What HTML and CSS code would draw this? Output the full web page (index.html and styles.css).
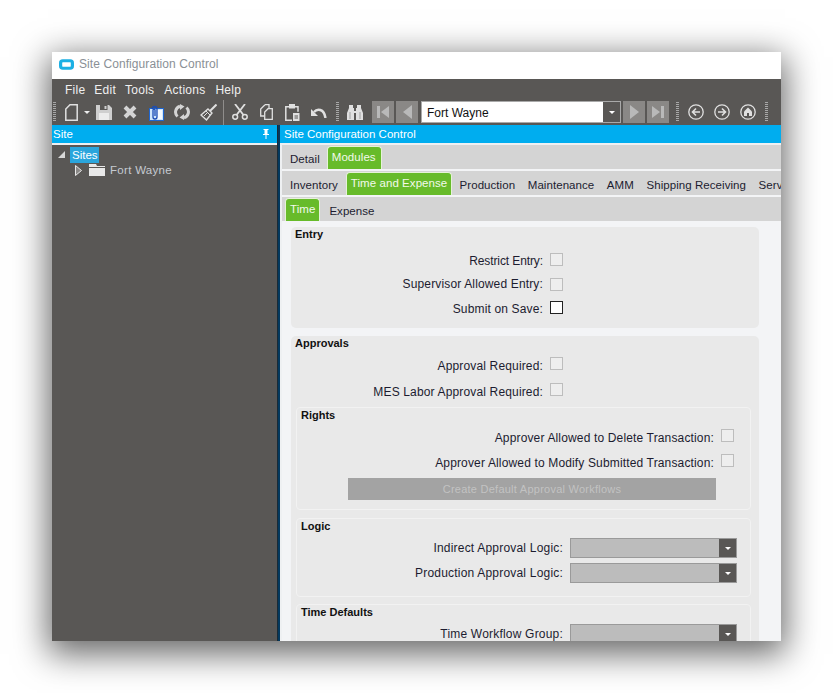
FILE: index.html
```html
<!DOCTYPE html>
<html lang="en">
<head>
<meta charset="utf-8">
<title>Site Configuration Control</title>
<link rel="stylesheet" href="styles.css">
</head>
<body>
<div class="window">
  <header class="titlebar">
    <svg class="app-icon" viewBox="0 0 14 10"><rect x="1.5" y="1.5" width="11" height="7" rx="2" fill="#fff" stroke="#1cb0e4" stroke-width="3"/></svg>
    <span>Site Configuration Control</span>
  </header>
  <nav class="menubar">
    <span>File</span><span>Edit</span><span>Tools</span><span>Actions</span><span>Help</span>
  </nav>
  <div class="toolbar">
    <i class="grip first-grip"></i>
    <svg class="ic i-new" width="13" height="17" viewBox="0 0 13 17"><path d="M5 .8h7.200v15.400H.8V5z" fill="none" stroke="#e0e0e0" stroke-width="1.500"/></svg>
    <i class="caret"></i>
    <svg class="ic i-save" width="16" height="15" viewBox="0 0 16 15"><path d="M0 0h13l3 3v12H0z" fill="#cfcfcf"/><rect x="4" y="0" width="7.500" height="5" fill="#595755"/><rect x="8.500" y="1" width="2" height="3" fill="#cfcfcf"/><rect x="3" y="8" width="10" height="7" fill="#ececec"/></svg>
    <svg class="ic i-x" width="14" height="14" viewBox="0 0 14 14"><path d="M2 2l10 10M12 2L2 12" stroke="#d4d4d4" stroke-width="4"/></svg>
    <svg class="ic i-clip" width="15" height="17" viewBox="0 0 15 17"><rect x=".5" y="4.500" width="14" height="12" fill="#cfe6fb" stroke="#1f66d0"/><rect x="8" y="6" width="5" height="9" fill="#f4faff"/><path d="M3 5a2.500 2.500 0 0 1 5 0v8a2 2 0 0 1-4 0V6a1 1 0 0 1 2 0v6" fill="none" stroke="#1b4db5" stroke-width="1.300"/></svg>
    <svg class="ic i-sync" width="16" height="16" viewBox="0 0 16 16"><path d="M3.500 12.500A6 6 0 0 1 6 2.300" fill="none" stroke="#d4d4d4" stroke-width="3"/><path d="M12.500 3.500A6 6 0 0 1 10 13.700" fill="none" stroke="#d4d4d4" stroke-width="3"/><path d="M6 0l4.500 2.500L6 6zM10 16l-4.500-2.500L10 10z" fill="#d4d4d4"/></svg>
    <svg class="ic i-broom" width="17" height="17" viewBox="0 0 17 17"><path d="M16.500 .5L10 7" stroke="#e0e0e0" stroke-width="2"/><path d="M8 5l4 4-5.500 7L1 11z" fill="none" stroke="#e0e0e0" stroke-width="1.400"/><path d="M6 7l4 4M4 12l3-3" stroke="#e0e0e0"/></svg>
    <i class="sep"></i>
    <svg class="ic i-cut" width="16" height="16" viewBox="0 0 16 16"><path d="M3 0l8.500 11M13 0L4.500 11" stroke="#e0e0e0" stroke-width="1.800"/><circle cx="3.200" cy="12.800" r="2.400" fill="none" stroke="#e0e0e0" stroke-width="1.500"/><circle cx="12.800" cy="12.800" r="2.400" fill="none" stroke="#e0e0e0" stroke-width="1.500"/></svg>
    <svg class="ic i-copy" width="13" height="16" viewBox="0 0 13 16"><path d="M5 .7h4v5M5 .7L.7 5v7H4" fill="none" stroke="#e0e0e0" stroke-width="1.300"/><path d="M8 4.700h4.300v10.600H4.700V8z" fill="#595755" stroke="#e0e0e0" stroke-width="1.300"/></svg>
    <svg class="ic i-paste" width="15" height="17" viewBox="0 0 15 17"><path d="M4 2.700H.8v13.600H7M10 2.700h3v5" fill="none" stroke="#e0e0e0" stroke-width="1.500"/><rect x="4" y="0" width="6" height="4.500" fill="#e0e0e0"/><path d="M8 9h6.500v8H8z" fill="#e0e0e0"/><path d="M9.500 12h3.500M9.500 14h3.500" stroke="#595755"/></svg>
    <svg class="ic i-undo" width="16" height="11" viewBox="0 0 16 11"><path d="M3 5C6 1.500 13 1 14.500 11" fill="none" stroke="#e0e0e0" stroke-width="2.500"/><path d="M0 2l7 7H0z" fill="#e0e0e0"/></svg>
    <i class="grip g2"></i>
    <svg class="ic i-bino" width="16" height="15" viewBox="0 0 16 15"><path d="M2 0h4v3h1v3H9V3h1V0h4v3l2 5v7H9V8H7v7H0V8l2-5z" fill="#e0e0e0"/><path d="M3 7v7M13 7v7" stroke="#a0a0a0"/></svg>
    <button class="nav-btn b-first"><svg width="12" height="12" viewBox="0 0 12 12"><path d="M0 0h3v12H0zM12 0v12L4 6z" fill="#b9b9b9"/></svg></button>
    <button class="nav-btn b-prev"><svg width="9" height="14" viewBox="0 0 9 14"><path d="M9 0v14L0 7z" fill="#b9b9b9"/></svg></button>
    <div class="site-combo"><span>Fort Wayne</span><b class="combo-arrow"><i></i></b></div>
    <button class="nav-btn b-next"><svg width="9" height="14" viewBox="0 0 9 14"><path d="M0 0v14l9-7z" fill="#b9b9b9"/></svg></button>
    <button class="nav-btn b-last"><svg width="12" height="12" viewBox="0 0 12 12"><path d="M0 0v12l8-6zM9 0h3v12H9z" fill="#b9b9b9"/></svg></button>
    <i class="grip g3"></i>
    <svg class="ic i-back" width="16" height="16" viewBox="0 0 16 16"><circle cx="8" cy="8" r="7.200" fill="none" stroke="#e0e0e0" stroke-width="1.300"/><path d="M12 8H5M8 4.500L4.500 8 8 11.500" fill="none" stroke="#e0e0e0" stroke-width="1.600"/></svg>
    <svg class="ic i-fwd" width="16" height="16" viewBox="0 0 16 16"><circle cx="8" cy="8" r="7.200" fill="none" stroke="#e0e0e0" stroke-width="1.300"/><path d="M4 8h7M8 4.500L11.500 8 8 11.500" fill="none" stroke="#e0e0e0" stroke-width="1.600"/></svg>
    <svg class="ic i-home" width="16" height="16" viewBox="0 0 16 16"><circle cx="8" cy="8" r="7.200" fill="none" stroke="#e0e0e0" stroke-width="1.300"/><path d="M8 3.500L12 7.500V12H4V7.500z" fill="#e0e0e0"/><rect x="7" y="9" width="2" height="3" fill="#595755"/></svg>
    <i class="grip g4"></i>
  </div>
  <main class="workspace">
    <aside class="tree-panel">
      <div class="panel-head">
        <span>Site</span>
        <svg width="8" height="10" viewBox="0 0 8 10"><path d="M1.500 0h5v1h-1v4h1.500v1H4.500v4h-1V6H1V5h1.500V1h-1z" fill="#fff"/></svg>
      </div>
      <div class="tree">
        <div class="tree-root">
          <svg width="9" height="9" viewBox="0 0 9 9"><path d="M8 1v7H1z" fill="#d8d8d8"/></svg>
          <span class="tree-sel">Sites</span>
        </div>
        <div class="tree-child">
          <svg class="expander" width="7" height="11" viewBox="0 0 7 11"><path d="M.5.5l6 5-6 5z" fill="#8a8886" stroke="#e8e8e8"/></svg>
          <svg class="folder" width="16" height="12" viewBox="0 0 16 12"><path d="M0 0h7l1 2h8v1H0z" fill="#e8e8e8"/><rect y="4" width="16" height="8" fill="#e8e8e8"/></svg>
          <span>Fort Wayne</span>
        </div>
      </div>
    </aside>
    <div class="splitter"></div>
    <section class="detail">
      <div class="panel-head detail-head"><span>Site Configuration Control</span></div>
      <div class="tabs tabs-1">
        <span class="tab">Detail</span><span class="tab on">Modules</span>
      </div>
      <div class="tabs tabs-2">
        <span class="tab">Inventory</span><span class="tab on">Time and Expense</span><span class="tab">Production</span><span class="tab">Maintenance</span><span class="tab">AMM</span><span class="tab">Shipping Receiving</span><span class="tab">Service</span>
      </div>
      <div class="tabs tabs-3">
        <span class="tab on">Time</span><span class="tab">Expense</span>
      </div>
      <div class="content">
        <section class="card entry">
          <h3>Entry</h3>
          <div class="row r1"><label>Restrict Entry:</label><i class="check off"></i></div>
          <div class="row r2"><label>Supervisor Allowed Entry:</label><i class="check off"></i></div>
          <div class="row r3"><label>Submit on Save:</label><i class="check"></i></div>
        </section>
        <section class="card approvals">
          <h3>Approvals</h3>
          <div class="row r4"><label>Approval Required:</label><i class="check off"></i></div>
          <div class="row r5"><label>MES Labor Approval Required:</label><i class="check off"></i></div>
          <section class="sub rights">
            <h3>Rights</h3>
            <div class="row r6"><label>Approver Allowed to Delete Transaction:</label><i class="check off"></i></div>
            <div class="row r7"><label>Approver Allowed to Modify Submitted Transaction:</label><i class="check off"></i></div>
            <div class="wide-btn">Create Default Approval Workflows</div>
          </section>
          <section class="sub logic">
            <h3>Logic</h3>
            <div class="row r8"><label>Indirect Approval Logic:</label><div class="combo"><b class="combo-arrow"><i></i></b></div></div>
            <div class="row r9"><label>Production Approval Logic:</label><div class="combo"><b class="combo-arrow"><i></i></b></div></div>
          </section>
          <section class="sub defaults">
            <h3>Time Defaults</h3>
            <div class="row r10"><label>Time Workflow Group:</label><div class="combo"><b class="combo-arrow"><i></i></b></div></div>
          </section>
        </section>
      </div>
    </section>
  </main>
</div>
</body>
</html>
```
FILE: styles.css
```css
* { box-sizing: border-box; }
html, body { margin: 0; height: 100%; background: #fff; overflow: hidden; }
body { padding: 52px 52px 0; font: 12px "Liberation Sans", Arial, sans-serif; color: #1c1c30; }
.window { width: 729px; height: 589px; display: flex; flex-direction: column; background: #595755; box-shadow: 0 9px 32px 4px rgba(0,0,0,.6); overflow: hidden; }
.titlebar { height: 27px; flex: none; background: #fff; display: flex; align-items: center; padding: 0 0 3px 7px; color: #8a9096; font-size: 12px; letter-spacing: .08px; }
.app-icon { width: 15px; height: 11px; margin-right: 5px; }
.menubar { height: 22px; flex: none; display: flex; align-items: center; padding-left: 13px; color: #f0f0f0; letter-spacing: .25px; }
.menubar span { margin-right: 9px; }
.menubar span:nth-child(3) { margin-right: 10px; }
.menubar span:nth-child(4) { margin-right: 10px; }
.toolbar { height: 24px; flex: none; display: flex; align-items: center; padding-bottom: 2px; }
.toolbar .ic { flex: none; }
.grip { display: block; flex: none; width: 3px; height: 20px; background: repeating-linear-gradient(#a8a8a8 0 1px, transparent 1px 2px); }
.first-grip { margin-left: 1px; }
.i-new { margin-left: 9px; }
.caret { width: 0; height: 0; border: 3px solid transparent; border-top: 3px solid #eee; border-bottom: 0; margin-left: 6px; }
.i-save { margin-left: 6px; }
.i-x { margin-left: 11px; }
.i-clip { margin-left: 12px; }
.i-sync { margin-left: 10px; }
.i-broom { margin-left: 10px; }
.sep { flex: none; width: 1px; height: 25px; background: #8f8d8b; margin-left: 6px; }
.i-cut { margin-left: 8px; }
.i-copy { margin-left: 12px; }
.i-paste { margin-left: 12px; }
.i-undo { margin-left: 11px; }
.g2 { margin-left: 9px; }
.i-bino { margin-left: 8px; }
.nav-btn { flex: none; width: 22px; height: 22px; padding: 0; border: 0; background: #8a8886; display: flex; align-items: center; justify-content: center; }
.b-first { margin-left: 9px; }
.b-prev { margin-left: 2px; }
.b-next { margin-left: 2px; }
.b-last { margin-left: 2px; }
.site-combo { flex: none; width: 200px; height: 22px; margin-left: 3px; background: #fff; border: 1px solid #a9a9a9; display: flex; align-items: stretch; justify-content: space-between; color: #111; }
.site-combo span { padding: 4px 0 0 5px; }
.site-combo .combo-arrow { width: 17px; }
.combo-arrow { flex: none; display: flex; align-items: center; justify-content: center; background: #595755; }
.combo-arrow i { width: 0; height: 0; border: 3px solid transparent; border-top: 3px solid #fff; border-bottom: 0; }
.g3 { margin-left: 7px; }
.i-back { margin-left: 9px; }
.i-fwd { margin-left: 10px; }
.i-home { margin-left: 10px; }
.g4 { margin-left: 9px; }
.workspace { flex: 1; min-height: 0; display: flex; }
.tree-panel { flex: none; width: 225px; }
.panel-head { height: 20px; background: #00adef; border-bottom: 2px solid #eef0f2; color: #fff; display: flex; align-items: center; justify-content: space-between; padding: 0 7px 1px 1px; font-size: 11.5px; }
.tree { color: #fff; }
.tree-root { display: flex; align-items: center; height: 17px; margin-top: 1px; padding-left: 5px; font-size: 11.5px; }
.tree-sel { margin-left: 4px; background: #2aa5dc; height: 16px; line-height: 16px; padding: 0 2px; width: 29px; color: #fff; }
.tree-child { display: flex; align-items: center; height: 14px; padding-left: 23px; color: #c5cad0; font-size: 11.5px; letter-spacing: .3px; }
.folder { margin: 0 5px 0 7px; }
.splitter { flex: none; width: 5px; background: linear-gradient(90deg, #1a2a36 0 1px, #04395e 1px 3px, #eef0f2 3px); }
.detail { flex: 1; min-width: 0; display: flex; flex-direction: column; background: #f3f4f6; }
.detail-head { margin-left: -2px; padding-left: 4px; }
.tabs { flex: none; display: flex; height: 24px; background: #d4d4d4; overflow: hidden; white-space: nowrap; align-items: flex-end; font-size: 11.5px; letter-spacing: .06px; }
.tab { flex: none; padding: 0 6px 3px; line-height: 14px; }
.tab.on { height: 23px; padding: 3px 4px 0; background: #67bb2a; color: #f2f9ea; border: 1px solid #e6f2d8; border-bottom: 0; border-radius: 4px 4px 0 0; margin: 0 3px; }
.tabs-1 { padding-left: 2px; margin-bottom: 2px; }
.tabs-1 .tab.on { margin-left: 1px; padding: 3px 5px 0 4px; }
.tabs-2 { padding-left: 2px; margin-bottom: 2px; }
.tabs-2 .tab { padding-left: 6.3px; padding-right: 6.3px; }
.tabs-2 .tab:first-child { padding-left: 6px; padding-right: 6px; }
.tabs-2 .tab.on { margin: 0 1px 0 2px; padding: 3px 4px 0; }
.content { flex: 1; min-height: 0; overflow: hidden; padding: 6px 22px 0 9px; }
.card { width: 468px; background: #e9e9e9; border-radius: 5px; padding: 1px 0 0 4px; }
.entry { height: 101px; margin-bottom: 8px; }
h3 { margin: 0; font-size: 11px; line-height: 13px; color: #111; font-weight: bold; }
.row { display: flex; justify-content: flex-end; align-items: center; height: 16px; padding-right: 196px; }
.row label { margin-right: 7px; white-space: nowrap; letter-spacing: .15px; }
.check { display: block; flex: none; width: 13px; height: 13px; background: #fff; border: 1px solid #222; }
.check.off { background: #eee; border-color: #bdbdbd; }
.r1 { margin-top: 11px; }
.r1 label { margin-top: 1px; letter-spacing: -.1px; }
.r1 .check { margin-bottom: 2px; }
.r2 { margin-top: 8px; }
.r3 { margin-top: 9px; }
.r3 .check { margin-bottom: 3px; }
.r4 { margin-top: 8px; }
.r4 .check { margin-bottom: 6px; }
.r5 { margin-top: 10px; }
.r5 .check { margin-bottom: 5px; }
.sub { width: 455px; margin-left: 1px; border: 1px solid #f2f2f2; border-radius: 4px; padding: 1px 0 0 4px; margin-bottom: 7px; }
.sub .row { padding-right: 16px; }
.rights { height: 103px; margin-top: 7px; margin-bottom: 8px; }
.r6 { margin-top: 8px; }
.r6 .check, .r7 .check { margin-bottom: 5px; }
.r7 { margin-top: 9px; }
.wide-btn { width: 368px; height: 22px; margin: 7px 0 0 47px; background: #a3a3a3; color: #c2c2c2; font-size: 11px; line-height: 22px; text-align: center; letter-spacing: .25px; }
.logic { height: 79px; }
.sub.logic .row, .sub.defaults .row { padding-right: 13px; height: 20px; }
.sub.logic label, .sub.defaults label { letter-spacing: .2px; }
.r8 { margin-top: 5px; }
.r9 { margin-top: 5px; }
.combo { flex: none; width: 167px; height: 20px; background: #bcbcbc; border: 1px solid #9a9a9a; display: flex; justify-content: flex-end; }
.combo .combo-arrow { width: 17px; }
.defaults { height: 60px; margin-bottom: 0; }
.r10 { margin-top: 5px; }
```
